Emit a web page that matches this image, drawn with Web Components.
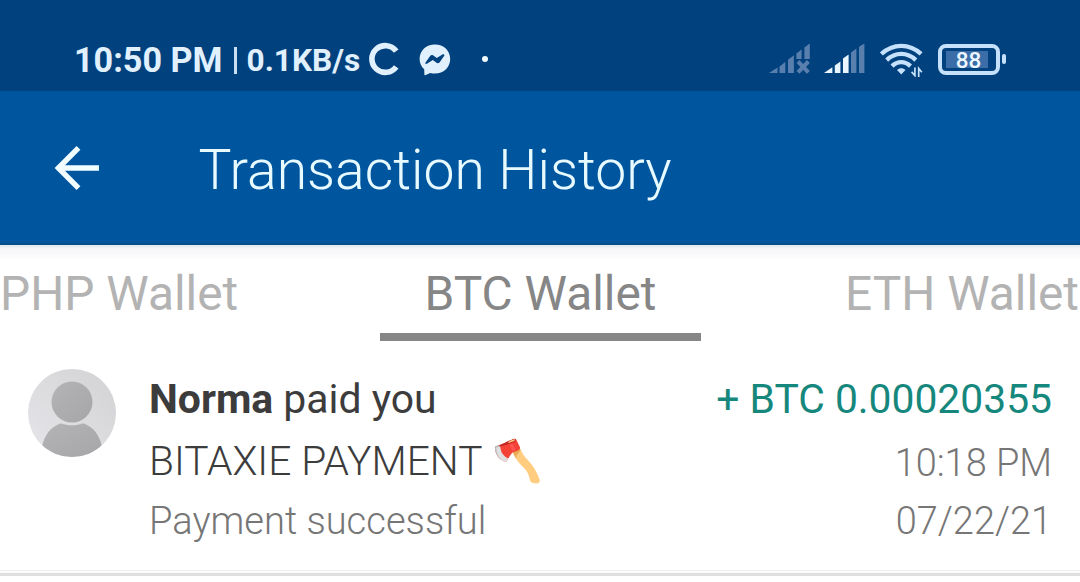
<!DOCTYPE html>
<html lang="en">
<head>
  <meta charset="utf-8">
  <title>Transaction History</title>
  <style>
    html, body {
      margin: 0;
      padding: 0;
      height: 100%;
      overflow: hidden;
      background-color: #ffffff;
      font-family: Roboto, "Liberation Sans", sans-serif;
    }
  </style>
</head>
<body>
  <wallet-screen></wallet-screen>

  <script>
    class BaseElement extends HTMLElement {
      constructor() {
        super();

        this.attachShadow({ mode: 'open' });
      }

      render() {
        const template = document.createElement('template');
        template.innerHTML = `${this.getStyle()}${this.getTemplate()}`;
        this.shadowRoot.replaceChildren(template.content.cloneNode(true));
      }

      connectedCallback() {
        this.render();
      }
    }

    class StatusBar extends BaseElement {
      getTemplate() {
        return `
          <span class="time">${this.getAttribute('time')}</span>
          <span class="divider"></span>
          <span class="speed">${this.getAttribute('speed')}</span>
          <svg class="coins" width="32" height="36" viewBox="0 0 32 36">
            <path d="M27.2 10.2 A13.4 13.4 0 1 0 27.2 25.8" fill="none" stroke="currentColor" stroke-width="5.6"/>
          </svg>
          <svg class="messenger" width="32" height="32" viewBox="0 0 32 32">
            <path d="M16 0.5 C7.3 0.5 0.6 6.6 0.6 15 C0.6 19.4 2.4 22.8 5.2 25.3 L5.4 30.4 C5.5 31.2 6.1 31.4 6.8 31.1 L11.2 28.9 C12.7 29.4 14.3 29.6 16 29.6 C24.6 29.6 31.2 23.5 31.2 15 C31.2 6.6 24.6 0.5 16 0.5 Z" fill="currentColor"/>
            <path d="M6.4 18.8 L11.1 12 C11.9 10.9 13.2 10.7 14.3 11.4 L17.8 14.1 L23.4 10.6 C24.6 9.9 25.9 10.7 25.2 11.8 L20.7 18.3 C19.9 19.4 18.5 19.6 17.5 18.8 L13.8 16 L8.3 19.6 C7 20.4 5.8 19.8 6.4 18.8 Z" fill="#01417e"/>
          </svg>
          <span class="dot"></span>
          <span class="space"></span>
          <svg class="sim sim--off" width="42" height="32" viewBox="0 0 42 32">
            <g fill="#587fae">
              <path d="M0 30 L8.5 24.6 V30 Z"/>
              <path d="M10.5 23.4 L16.3 19 V30 H10.5 Z"/>
              <path d="M19 16.7 L24.9 12.3 V30 H19 Z"/>
              <path d="M27.4 10.4 L32.6 6.5 V16 H27.4 Z"/>
              <path d="M35.4 4.4 L40.8 0.4 V16 H35.4 Z"/>
            </g>
            <path d="M29 18.5 L39.4 29.4 M39.4 18.5 L29 29.4" stroke="#587fae" stroke-width="4"/>
          </svg>
          <svg class="sim sim--on" width="41" height="32" viewBox="0 0 41 32">
            <g fill="currentColor">
              <path d="M0 30 L8.4 24.2 V30 Z"/>
              <path d="M10.8 22.4 L16.4 18.4 V30 H10.8 Z"/>
              <path d="M19 15.6 L24.6 11.4 V30 H19 Z"/>
            </g>
            <path d="M27 9.6 L32.4 5.6 V30 H27 Z M35 3.8 L40.4 0.4 V30 H35 Z" fill="#587fae"/>
          </svg>
          <svg class="wifi" width="44" height="34" viewBox="0 0 44 34">
            <g fill="none" stroke="currentColor" stroke-width="4.3">
              <path d="M1.4 10.9 C13 0.1 29.5 0.1 41.1 10.9"/>
              <path d="M6.7 17.1 C15.3 8.9 27.2 8.9 35.8 17.1"/>
              <path d="M12 23.1 C17.5 17.8 25 17.8 30.5 23.1"/>
            </g>
            <path d="M21.2 31.4 L17 27 C19.5 24.7 23 24.7 25.5 27 Z" fill="currentColor"/>
            <path d="M34.9 24.5 V32.6 L31.6 28.9 M38.7 34 V25.4 L41.8 29.2" fill="none" stroke="currentColor" stroke-width="1.7"/>
          </svg>
          <span class="battery"><span class="battery__level">${this.getAttribute('battery')}</span></span>
          <span class="battery__tip"></span>
        `;
      }

      getStyle() {
        return `
          <style>
            :host {
              display: flex;
              align-items: center;
              box-sizing: border-box;
              height: 91px;
              padding: 30px 74px 0 74px;
              color: #e0f0fd;
              background-color: #01417e;
              font-weight: 700;
              white-space: nowrap;
            }

            svg, span {
              flex: none;
            }

            .time {
              width: 159.5px;
              margin-top: -2px;
              font-size: 34.2px;
            }

            .divider {
              width: 3px;
              height: 27px;
              margin-right: 10px;
              background-color: #c9e0f4;
            }

            .speed {
              width: 122.5px;
              font-size: 31.6px;
            }

            .coins {
              margin: -3px 18px 0 0;
            }

            .messenger {
              margin: -1px 31px 0 0;
            }

            .dot {
              width: 6px;
              height: 6px;
              margin-top: -3px;
              border-radius: 50%;
              background-color: #f1faff;
            }

            .space {
              flex: 1;
            }

            .sim {
              margin-top: -3px;
            }

            .sim--off {
              margin-right: 13px;
            }

            .sim--on {
              margin-right: 15px;
              color: #eaf6ff;
            }

            .wifi {
              margin: -2px 14px 0 0;
              color: #c5e1fb;
            }

            .battery {
              display: flex;
              box-sizing: border-box;
              width: 62px;
              height: 31px;
              margin-top: -3px;
              padding: 3px 8px 3px 4px;
              border: 4px solid #c5e1fb;
              border-radius: 8px;
            }

            .battery__level {
              flex: 1;
              background-color: #3b6ea8;
              color: #edf7ff;
              font-size: 22.5px;
              font-weight: 500;
              line-height: 19px;
              text-align: center;
              text-indent: 3px;
            }

            .battery__tip {
              width: 4px;
              height: 10px;
              margin: -3px 0 0 2px;
              border-radius: 2px;
              background-color: #c5e1fb;
            }
          </style>
        `;
      }
    }

    class AppHeader extends BaseElement {
      getTemplate() {
        return `
          <svg class="back" width="46" height="46" viewBox="0 0 46 46">
            <path d="M24.5 2.8 L4.4 23 L24.5 43.2 M4.4 23 H45" fill="none" stroke="currentColor" stroke-width="5.4"/>
          </svg>
          <h1><slot></slot></h1>
        `;
      }

      getStyle() {
        return `
          <style>
            :host {
              display: flex;
              align-items: center;
              height: 154px;
              padding-left: 54px;
              box-sizing: border-box;
              color: #e6faff;
              background-color: #00569e;
              border-bottom: 2px solid #055088;
            }

            .back {
              flex: none;
              margin: 2px 98.5px 0 0;
              color: #f2fdff;
            }

            h1 {
              margin: 6px 0 0;
              font-size: 55.3px;
              font-weight: 300;
              white-space: nowrap;
            }
          </style>
        `;
      }
    }

    class WalletTabs extends BaseElement {
      getTemplate() {
        return `<slot></slot>`;
      }

      getStyle() {
        return `
          <style>
            :host {
              display: grid;
              grid-template-columns: 380px 321px 379px;
              height: 96px;
              background: linear-gradient(#dfe6ee, #f6f6f9 4px, #fbfafc 10px, #ffffff 15px);
            }
          </style>
        `;
      }
    }

    class WalletTab extends BaseElement {
      getTemplate() {
        return `<slot></slot>`;
      }

      getStyle() {
        return `
          <style>
            :host {
              display: flex;
              align-items: center;
              justify-content: center;
              box-sizing: border-box;
              padding-top: 10px;
              border-bottom: 8px solid transparent;
              color: #b3b3b3;
              font-size: 47.8px;
              white-space: nowrap;
            }

            :host([active]) {
              color: #868686;
              border-color: #868686;
            }

            :host([align="start"]) {
              justify-content: flex-start;
            }

            :host([align="end"]) {
              justify-content: flex-end;
              padding-right: 1px;
            }
          </style>
        `;
      }
    }

    class UserAvatar extends BaseElement {
      getTemplate() {
        return `
          <svg width="88" height="88" viewBox="0 0 88 88">
            <defs>
              <linearGradient id="back" x1="1" y1="0" x2="0" y2="1">
                <stop offset="0" stop-color="#d2d2d4"/>
                <stop offset="1" stop-color="#e6e6ea"/>
              </linearGradient>
              <linearGradient id="person" x1="0" y1="0" x2="1" y2="1">
                <stop offset="0" stop-color="#b4b4b6"/>
                <stop offset="1" stop-color="#a6a6a8"/>
              </linearGradient>
              <clipPath id="round"><circle cx="44" cy="44" r="44"/></clipPath>
            </defs>
            <g clip-path="url(#round)">
              <rect width="88" height="88" fill="url(#back)"/>
              <circle cx="44" cy="33" r="20.5" fill="url(#person)"/>
              <path d="M13.5 80 C16 66 23 57.5 33 54.3 C40 57 48 57 55 54.3 C65 57.5 72 66 74.5 80 V88 H13.5 Z" fill="url(#person)"/>
            </g>
          </svg>
        `;
      }

      getStyle() {
        return `
          <style>
            :host {
              display: block;
              width: 88px;
              height: 88px;
            }

            svg {
              display: block;
            }
          </style>
        `;
      }
    }

    class TransactionItem extends BaseElement {
      getTemplate() {
        return `
          <user-avatar></user-avatar>
          <div class="info">
            <div class="title"><slot name="title"></slot></div>
            <div class="note"><slot name="note"></slot></div>
            <div class="muted"><slot name="status"></slot></div>
          </div>
          <div class="info info--right">
            <div class="title amount"><slot name="amount"></slot></div>
            <div class="muted muted--time"><slot name="time"></slot></div>
            <div class="muted"><slot name="date"></slot></div>
          </div>
        `;
      }

      getStyle() {
        return `
          <style>
            :host {
              display: grid;
              grid-template-columns: 88px 1fr auto;
              column-gap: 33px;
              box-sizing: border-box;
              height: 235px;
              padding: 27px 28px 0;
              border-bottom: 3px solid #dfdfdf;
              box-shadow: inset 0 -2px 0 #fcfcfc, inset 0 -3px 0 #f1f1f1;
              white-space: nowrap;
            }

            user-avatar {
              margin-top: 1px;
            }

            .info {
              display: grid;
              grid-template-rows: 62px 62px 58px;
            }

            .info--right {
              text-align: right;
            }

            .title {
              color: #3c3c3c;
              font-size: 40.9px;
              line-height: 63px;
            }

            .note {
              color: #3c3c3c;
              font-size: 40.7px;
              font-weight: 300;
              line-height: 62px;
            }

            .muted {
              color: #767676;
              font-size: 38.1px;
              font-weight: 300;
              line-height: 59px;
            }

            .muted--time {
              line-height: 67px;
            }

            .info--right .muted {
              font-size: 37.9px;
            }

            .amount {
              color: #16877c;
              font-size: 40.8px;
            }
          </style>
        `;
      }
    }

    class WalletScreen extends BaseElement {
      getTemplate() {
        return `
          <status-bar time="10:50 PM" speed="0.1KB/s" battery="88"></status-bar>
          <app-header>Transaction History</app-header>
          <wallet-tabs>
            <wallet-tab align="start">PHP Wallet</wallet-tab>
            <wallet-tab active>BTC Wallet</wallet-tab>
            <wallet-tab align="end">ETH Wallet</wallet-tab>
          </wallet-tabs>
          <transaction-item>
            <span slot="title"><b>Norma</b> paid you</span>
            <span slot="note">BITAXIE PAYMENT 🪓</span>
            <span slot="status">Payment successful</span>
            <span slot="amount">+ BTC 0.00020355</span>
            <span slot="time">10:18 PM</span>
            <span slot="date">07/22/21</span>
          </transaction-item>
        `;
      }

      getStyle() {
        return `
          <style>
            :host {
              display: block;
            }

            b {
              font-weight: 700;
            }
          </style>
        `;
      }
    }

    customElements.define('status-bar', StatusBar);
    customElements.define('app-header', AppHeader);
    customElements.define('wallet-tabs', WalletTabs);
    customElements.define('wallet-tab', WalletTab);
    customElements.define('user-avatar', UserAvatar);
    customElements.define('transaction-item', TransactionItem);
    customElements.define('wallet-screen', WalletScreen);
  </script>
</body>
</html>
